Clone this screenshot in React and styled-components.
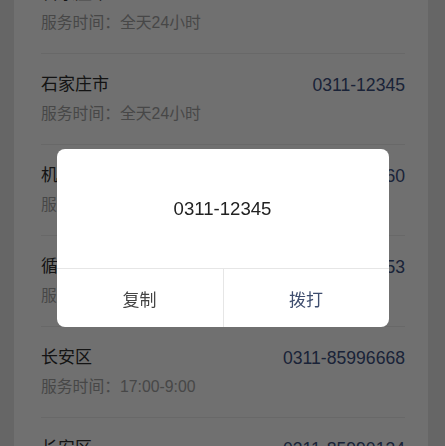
import styled, { createGlobalStyle } from "styled-components"

const GlobalStyle = createGlobalStyle`
    html, body {
        margin: 0;
        padding: 0;
        background: #e9e9e9;
        font-family: "Liberation Sans", "Noto Sans CJK SC", sans-serif;
    }
`

const stations = [
    { name: "石家庄市", phone: "0311-86066666", hours: "全天24小时" },
    { name: "石家庄市", phone: "0311-12345", hours: "全天24小时" },
    { name: "机场", phone: "0311-85996660", hours: "全天24小时" },
    { name: "循环化工园区", phone: "0311-85996653", hours: "全天24小时" },
    { name: "长安区", phone: "0311-85996668", hours: "17:00-9:00" },
    { name: "长安区", phone: "0311-85990134", hours: "17:00-9:00" },
]

export default function App() {
    return (
        <>
            <GlobalStyle />
            <Page>
                <Card>
                    {stations.map((s, i) => (
                        <Row key={i}>
                            <TitleLine>
                                <Name>{s.name}</Name>
                                <Phone>{s.phone}</Phone>
                            </TitleLine>
                            <Hours>服务时间：{s.hours}</Hours>
                        </Row>
                    ))}
                </Card>
            </Page>
            <Mask>
                <Dialog>
                    <DialogBody>0311-12345</DialogBody>
                    <Actions>
                        <ActionButton>复制</ActionButton>
                        <ActionButton $primary>拨打</ActionButton>
                    </Actions>
                </Dialog>
            </Mask>
        </>
    )
}

const Page = styled.div`
    height: 446px;
    overflow: hidden;
    padding: 0 17px 0 14px;
`

const Card = styled.div`
    background: #fff;
    margin-top: -37px;
    padding: 0 23px 0 27px;
`

const Row = styled.div`
    padding: 20px 0;
    border-bottom: 1px solid #ececec;
`

const TitleLine = styled.div`
    display: flex;
    justify-content: space-between;
    align-items: center;
    line-height: 22px;
`

const Name = styled.span`
    font-size: 17px;
    color: #2e2e2e;
`

const Phone = styled.span`
    font-size: 17.6px;
    color: #3d5080;
`

const Hours = styled.div`
    margin-top: 8px;
    font-size: 15.8px;
    line-height: 20px;
    color: #a3a3a3;
`

const Mask = styled.div`
    position: fixed;
    inset: 0;
    background: rgba(0, 0, 0, 0.56);
    display: flex;
    justify-content: center;
    align-items: flex-start;
    padding-top: 149px;
`

const Dialog = styled.div`
    width: 332px;
    background: #fff;
    border-radius: 8px;
    overflow: hidden;
`

const DialogBody = styled.div`
    height: 119px;
    display: flex;
    align-items: center;
    justify-content: center;
    font-size: 18.6px;
    color: #222;
    border-bottom: 1px solid #e6e6e6;
`

const Actions = styled.div`
    display: grid;
    grid-template-columns: 1fr 1fr;
    height: 58px;
`

const ActionButton = styled.div`
    display: flex;
    align-items: center;
    justify-content: center;
    font-size: 17px;
    color: ${p => (p.$primary ? "#3e4d6e" : "#444")};
    & + & {
        border-left: 1px solid #e6e6e6;
    }
`
